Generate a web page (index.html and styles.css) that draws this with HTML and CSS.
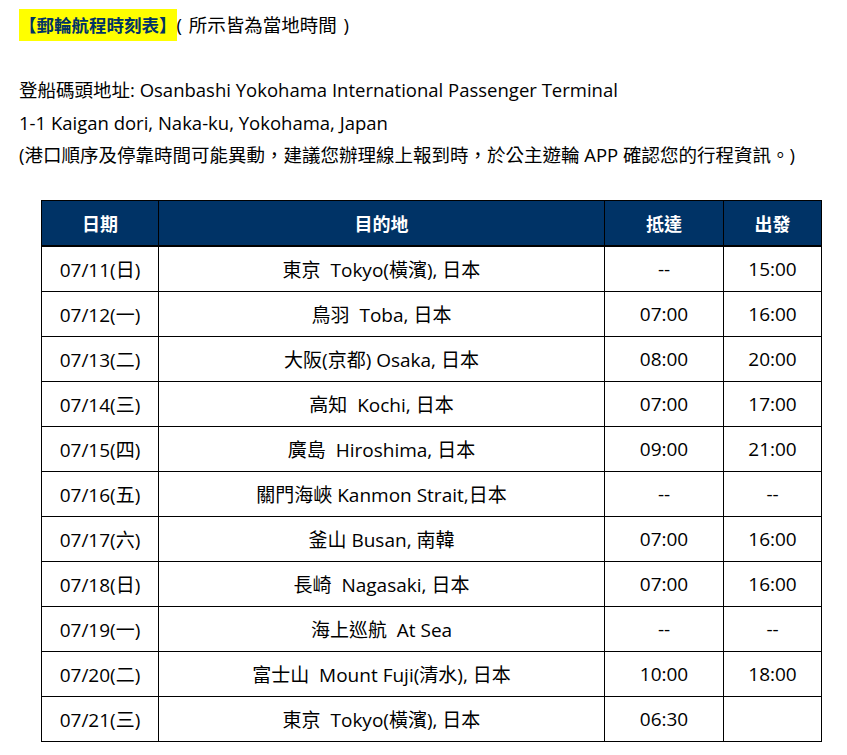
FILE: index.html
```html
<!DOCTYPE html>
<html lang="zh-Hant">
<head>
<meta charset="utf-8">
<title>郵輪航程時刻表</title>
<link rel="stylesheet" href="styles.css">
</head>
<body>
<div class="intro">
  <div class="title-line"><span class="mark">【郵輪航程時刻表】</span><span class="note">( 所示皆為當地時間 )</span></div>
  <div class="blank">&nbsp;</div>
  <div>登船碼頭地址: Osanbashi Yokohama International Passenger Terminal</div>
  <div>1-1 Kaigan dori, Naka-ku, Yokohama, Japan</div>
  <div>(港口順序及停靠時間可能異動，建議您辦理線上報到時，於公主遊輪 APP 確認您的行程資訊。)</div>
</div>
<table class="schedule">
  <colgroup>
    <col class="c-date"><col class="c-dest"><col class="c-arr"><col class="c-dep">
  </colgroup>
  <thead>
    <tr><th>日期</th><th>目的地</th><th>抵達</th><th>出發</th></tr>
  </thead>
  <tbody>
    <tr><td>07/11(日)</td><td>東京&nbsp; Tokyo(橫濱), 日本</td><td>--</td><td>15:00</td></tr>
    <tr><td>07/12(一)</td><td>鳥羽&nbsp; Toba, 日本</td><td>07:00</td><td>16:00</td></tr>
    <tr><td>07/13(二)</td><td>大阪(京都) Osaka, 日本</td><td>08:00</td><td>20:00</td></tr>
    <tr><td>07/14(三)</td><td>高知&nbsp; Kochi, 日本</td><td>07:00</td><td>17:00</td></tr>
    <tr><td>07/15(四)</td><td>廣島&nbsp; Hiroshima, 日本</td><td>09:00</td><td>21:00</td></tr>
    <tr><td>07/16(五)</td><td>關門海峽 Kanmon Strait,日本</td><td>--</td><td>--</td></tr>
    <tr><td>07/17(六)</td><td>釜山 Busan, 南韓</td><td>07:00</td><td>16:00</td></tr>
    <tr><td>07/18(日)</td><td>長崎&nbsp; Nagasaki, 日本</td><td>07:00</td><td>16:00</td></tr>
    <tr><td>07/19(一)</td><td>海上巡航&nbsp; At Sea</td><td>--</td><td>--</td></tr>
    <tr><td>07/20(二)</td><td>富士山&nbsp; Mount Fuji(清水), 日本</td><td>10:00</td><td>18:00</td></tr>
    <tr><td>07/21(三)</td><td>東京&nbsp; Tokyo(橫濱), 日本</td><td>06:30</td><td></td></tr>
  </tbody>
</table>
</body>
</html>
```
FILE: styles.css
```css
html, body {
  margin: 0;
  padding: 0;
  background: #ffffff;
}
body {
  font-family: "Open Sans", "Noto Sans CJK TC", sans-serif;
  color: #000000;
  font-size: 18.5px;
}
.intro {
  padding: 9px 0 0 19px;
  line-height: 32.5px;
}
.mark {
  background: #ffff00;
  color: #003366;
  font-weight: bold;
  font-size: 17.5px;
  display: inline-block;
  line-height: 32px;
  vertical-align: top;
}
.note {
  color: #000000;
  font-size: 18.5px;
  word-spacing: 2px;
}
.schedule {
  margin: 28px 0 0 41px;
  width: 781px;
  border-collapse: collapse;
  table-layout: fixed;
  font-size: 19px;
}
.c-date { width: 117px; }
.c-dest { width: 446px; }
.c-arr { width: 119px; }
.c-dep { width: 98px; }
.schedule th {
  background: #003366;
  color: #ffffff;
  font-weight: bold;
  font-size: 18px;
  height: 44px;
  padding: 0;
  border: 1px solid #000000;
  border-bottom: 2px solid #000000;
  text-align: center;
}
.schedule td {
  height: 44px;
  padding: 0;
  border: 1px solid #000000;
  text-align: center;
}
```
